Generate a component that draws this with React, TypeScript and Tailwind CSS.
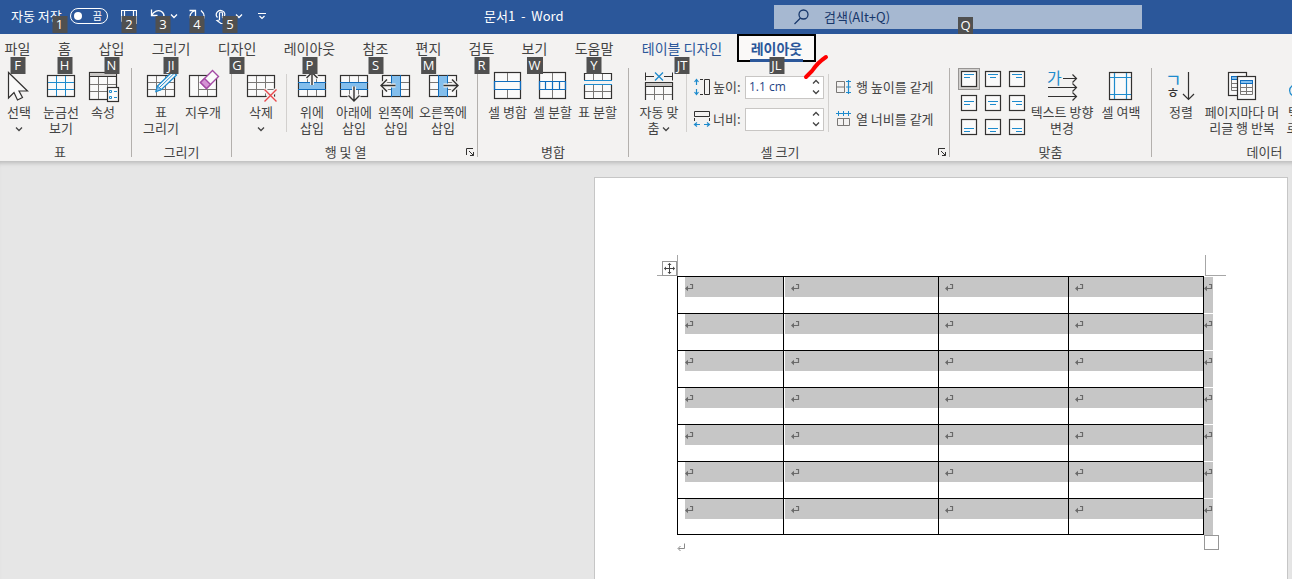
import React, { useState } from 'react';
import clsx from 'clsx';

const INK = '#323130';
const GRID = '#797775';
const BLUE = '#1e8bcd';
const DEEP = '#0f6cbd';
const BAND = '#83beec';

const KeyTip = ({ text, className }: { text: string; className: string }) => (
  <span
    className={clsx(
      "absolute z-20 h-[17px] min-w-[15px] px-[2px] bg-[#505050] text-white text-center text-[13px] leading-[17px] font-normal font-['Open_Sans','Noto_Sans',sans-serif]",
      className
    )}
  >
    {text}
  </span>
);

const Chevron = () => (
  <svg width="8" height="8" viewBox="0 0 8 8" fill="none" stroke="currentColor" strokeWidth="1.3" className="inline-block shrink-0">
    <path d="M1 2.500 4 5.500 7 2.500" />
  </svg>
);

const Icon = ({ children }: { children: React.ReactNode }) => (
  <svg width="32" height="32" viewBox="0 0 32 32" fill="none" stroke={INK} className="shrink-0 overflow-visible">
    {children}
  </svg>
);

const Small = ({ children }: { children: React.ReactNode }) => (
  <svg width="16" height="16" viewBox="0 0 16 16" fill="none" stroke={INK} className="shrink-0 overflow-visible">
    {children}
  </svg>
);

// 28x22 table outline shared by most of the large icons
const TableBox = () => <rect x="2.5" y="4.5" width="27" height="21" fill="#fafafa" strokeWidth="1.2" />;
const TableLines = () => <path d="M11.5 5V25M20.5 5V25M3 11.5H29M3 18.5H29" stroke={GRID} />;

const SelectIcon = () => (
  <Icon><path d="M5.5 1.5V27L11 21.5 14.5 29 19.5 26.5 16 20H24.5Z" fill="#fafafa" strokeWidth="1.2" /></Icon>
);

const GridlinesIcon = () => (
  <Icon>
    <TableBox />
    <path d="M11.5 5V25M20.5 5V25M3 11.5H29M3 18.5H29" stroke={BLUE} />
  </Icon>
);

const PropertiesIcon = () => (
  <Icon>
    <rect x="2.5" y="1.5" width="27" height="27" fill="#fafafa" strokeWidth="1.2" />
    <rect x="3" y="2" width="26" height="3" fill="#c8c6c4" stroke="none" />
    <path d="M3 5.5H29" />
    <path d="M11.5 6V28M20.5 6V28M3 13.5H29M3 20.5H29" stroke={GRID} />
    <rect x="20.5" y="16.5" width="11" height="14" fill="#fafafa" strokeWidth="1.2" />
    <path d="M22.5 19.5h2v2h-2zM22.5 25.5h2v2h-2zM27 20.5h3M27 26.5h3" stroke={BLUE} />
  </Icon>
);

const DrawIcon = () => (
  <Icon>
    <TableBox />
    <TableLines />
    <path d="M11 20.5 12.5 15 27.5 0.5 31.5 4 16.5 18.5Z" fill="#fafafa" stroke={BLUE} strokeWidth="1.3" />
    <path d="M11 20.5 12.5 15 16.5 18.5Z" fill={BAND} stroke={BLUE} />
    <path d="M14.5 16.5 29 2.5" stroke={BLUE} />
  </Icon>
);

const EraserIcon = () => (
  <Icon>
    <TableBox />
    <path d="M11.5 5V25M20.5 18V25M11.5 18.5H29" stroke={GRID} />
    <path d="M25.5-.5 31.5 5.5 19.5 17.5 13.5 11.5Z" fill="#fafafa" stroke="#a349a4" strokeWidth="1.4" />
    <path d="M17.5 7.5 23.5 13.5 19.5 17.5 13.5 11.5Z" fill="#d492d4" stroke="#a349a4" strokeWidth="1.4" />
  </Icon>
);

const DeleteIcon = () => (
  <Icon>
    <TableBox />
    <TableLines />
    <path d="M19.5 18.5 31.5 30.5M31.5 18.5 19.5 30.5" stroke="#f3f2f1" strokeWidth="4" />
    <path d="M19.5 18.5 31.5 30.5M31.5 18.5 19.5 30.5" stroke="#e8484c" strokeWidth="1.4" />
  </Icon>
);

const InsertIcon = ({ arrow, vertical, lines }: { arrow: string; vertical?: boolean; lines: string }) => (
  <Icon>
    <TableBox />
    <path d={lines} stroke={GRID} />
    {vertical ? (
      <>
        <rect x="11" y="5" width="10" height="20" fill={BAND} stroke="none" />
        <path d="M11.5 4V26M20.5 4V26" stroke={DEEP} />
      </>
    ) : (
      <>
        <rect x="3" y="11" width="26" height="8" fill={BAND} stroke="none" />
        <path d="M2 11.5H30M2 18.5H30" stroke={DEEP} />
      </>
    )}
    <path d={arrow} stroke="#f3f2f1" strokeWidth="4" />
    <path d={arrow} strokeWidth="1.4" />
  </Icon>
);

const MergeIcon = () => (
  <Icon>
    <rect x="2.5" y="1.5" width="26" height="26" fill="#fafafa" strokeWidth="1.2" />
    <path d="M15.5 2V10M15.5 19V27" stroke={GRID} />
    <path d="M2.5 10.5h26v8h-26z" stroke={DEEP} strokeWidth="1.2" />
  </Icon>
);

const SplitCellsIcon = () => (
  <Icon>
    <rect x="2.5" y="1.5" width="26" height="26" fill="#fafafa" strokeWidth="1.2" />
    <path d="M15.5 2V10M15.5 19V27" stroke={GRID} />
    <path d="M2.5 10.5h26v8h-26zM8.5 10.5v8M15.5 10.5v8M22.5 10.5v8" stroke={DEEP} strokeWidth="1.2" />
  </Icon>
);

const SplitTableIcon = () => (
  <Icon>
    <path d="M2.5 9V2.5H29.5V9" fill="#fafafa" strokeWidth="1.2" />
    <path d="M2.5 14V27.5H29.5V14" fill="#fafafa" strokeWidth="1.2" />
    <path d="M11.5 3V9M20.5 3V9M11.5 14V27M20.5 14V27M3 20.5H29" stroke={GRID} />
    <path d="M2 9.5H30M2 13.5H30" stroke={BLUE} strokeWidth="1.2" />
  </Icon>
);

const AutoFitIcon = () => (
  <Icon>
    <path d="M2.5 1.5V9.5M29.5 1.5V9.5M3 5.5H11M21 5.5H29" />
    <path d="M12 1.5 20 9.5M20 1.5 12 9.5" stroke={BLUE} strokeWidth="1.3" />
    <path d="M2.5 29V11.5H29.5V29" fill="#fafafa" strokeWidth="1.2" />
    <rect x="3" y="12" width="26" height="3" fill="#c8c6c4" stroke="none" />
    <path d="M3 15.5H29" />
    <path d="M11.5 16V29M20.5 16V29M3 23.5H29" stroke={GRID} />
  </Icon>
);

const TextDirectionIcon = () => (
  <Icon>
    <text x="1" y="13" fontSize="16" fill={BLUE} stroke="none">가</text>
    <path d="M17 7.5H30M26.5 3.5 30.5 7.5 26.5 11.5M2 16.5H30M26.5 12.5 30.5 16.5 26.5 20.5M2 25.5H30M26.5 21.5 30.5 25.5 26.5 29.5" strokeWidth="1.2" />
  </Icon>
);

const MarginsIcon = () => (
  <Icon>
    <rect x="4.5" y="1.5" width="22" height="27" fill="#fafafa" strokeWidth="1.2" />
    <path d="M9.5 2V28M21.5 2V28M5 6.5H26M5 23.5H26" stroke={BLUE} strokeWidth="1.2" />
  </Icon>
);

const SortIcon = () => (
  <Icon>
    <text x="0" y="16" fontSize="18" fill={BLUE} stroke="none">ㄱ</text>
    <text x="1" y="27" fontSize="15" fill={INK} stroke="none">ㅎ</text>
    <path d="M23.5 1V28.5M18 23 23.5 28.5 29 23" strokeWidth="1.2" />
  </Icon>
);

const RepeatHeaderIcon = () => (
  <Icon>
    <rect x="2.5" y="1.5" width="18" height="23" fill="#fafafa" strokeWidth="1.2" />
    <rect x="5.5" y="5.5" width="12" height="3" fill={BAND} stroke={DEEP} />
    <path d="M5.5 9V19.5H17M6 12.5H17M6 16.5H17" stroke={GRID} />
    <rect x="11.5" y="5.5" width="18" height="23" fill="#fafafa" strokeWidth="1.2" />
    <path d="M14.5 13V23.5H26.5V13M20.5 13V23M15 16.5H26M15 20.5H26" stroke={GRID} />
    <rect x="14.5" y="9.5" width="12" height="3" fill={BAND} stroke={DEEP} />
  </Icon>
);

const ConvertIcon = () => (
  <Icon>
    <path d="M3 14C-1.500 17-1.500 22 3 25" stroke={BLUE} strokeWidth="1.3" />
    <rect x="8.500" y="4.500" width="21" height="21" fill="#fafafa" />
  </Icon>
);

const RibbonButton = ({ icon, className, children }: { icon: React.ReactNode; className: string; children: React.ReactNode }) => (
  <button type="button" className={clsx('flex shrink-0 flex-col items-center pt-[3px] hover:bg-[#e1dfdd]', className)}>
    {icon}
    <span className="mt-px whitespace-pre text-center text-[13px] leading-4">{children}</span>
  </button>
);

const Launcher = ({ name }: { name: string }) => (
  <button type="button" aria-label={name} className="w-[18px] pl-[7px] shrink-0">
    <svg width="9" height="9" viewBox="0 0 9 9" fill="none" stroke={INK}>
      <path d="M.5 7V.5H7M3 3 7.500 7.500M7.500 4V7.500H4" />
    </svg>
  </button>
);

const Group = ({ title, className, launcher, labelClass, children }: {
  title: string;
  className: string;
  launcher?: boolean;
  labelClass?: string;
  children: React.ReactNode;
}) => (
  <section aria-label={title} className={clsx('flex h-[93px] shrink-0 flex-col', className)}>
    <div className="flex flex-1 items-start">{children}</div>
    <div className={clsx('flex items-center', labelClass)}>
      <span className="flex-1 text-center text-[13px] leading-[18px]">{title}</span>
      {launcher && <Launcher name={`${title} 설정`} />}
    </div>
  </section>
);

const Divider = () => <div className="h-[89px] w-px shrink-0 bg-[#b3b0ad]" />;
const InnerDivider = ({ className }: { className: string }) => (
  <div className={clsx('mt-[6px] h-[58px] w-px shrink-0 bg-[#d2d0ce]', className)} />
);

const SizeField = ({ id, label, icon, initial }: { id: string; label: string; icon: React.ReactNode; initial: string }) => {
  const [value, setValue] = useState(initial);
  const step = (delta: number) => setValue(`${Math.max(0, (parseFloat(value) || 0) + delta).toFixed(1)} cm`);

  return (
    <div className="flex h-8 items-center">
      {icon}
      <label htmlFor={id} className="ml-[3px] w-8 whitespace-nowrap text-[13px] leading-4">{label}</label>
      <div className="flex h-[23px] w-[79px] border border-[#c8c6c4] bg-white">
        <input
          id={id}
          value={value}
          onChange={(e) => setValue(e.target.value)}
          className="w-[62px] min-w-0 pl-[3px] text-[12px] text-[#1f4485] outline-none font-['Open_Sans','Noto_Sans',sans-serif]"
        />
        <div className="flex flex-1 flex-col items-center justify-around">
          <button type="button" aria-label={`${label} 늘리기`} onClick={() => step(0.1)} className="flex h-2 rotate-180 items-center">
            <Chevron />
          </button>
          <button type="button" aria-label={`${label} 줄이기`} onClick={() => step(-0.1)} className="flex h-2 items-center">
            <Chevron />
          </button>
        </div>
      </div>
    </div>
  );
};

const tabs = [
  { name: '파일', tip: 'F', width: '-ml-[9px] w-[53px]' },
  { name: '홈', tip: 'H', width: 'w-[41px]' },
  { name: '삽입', tip: 'N', width: 'w-[53px]' },
  { name: '그리기', tip: 'JI', width: 'w-[66px]' },
  { name: '디자인', tip: 'G', width: 'w-[66px]' },
  { name: '레이아웃', tip: 'P', width: 'w-[79px]' },
  { name: '참조', tip: 'S', width: 'w-[53px]' },
  { name: '편지', tip: 'M', width: 'w-[53px]' },
  { name: '검토', tip: 'R', width: 'w-[53px]' },
  { name: '보기', tip: 'W', width: 'w-[53px]' },
  { name: '도움말', tip: 'Y', width: 'w-[66px]' },
  { name: '테이블 디자인', tip: 'JT', width: 'w-[110px] text-[#2b579a]' },
];

const alignments = [
  { name: '왼쪽 위', d: 'M3 3.500H13M3 6.500H9' },
  { name: '가운데 위', d: 'M3 3.500H13M5 6.500H11' },
  { name: '오른쪽 위', d: 'M3 3.500H13M7 6.500H13' },
  { name: '왼쪽 가운데', d: 'M3 6.500H13M3 9.500H9' },
  { name: '정가운데', d: 'M3 6.500H13M5 9.500H11' },
  { name: '오른쪽 가운데', d: 'M3 6.500H13M7 9.500H13' },
  { name: '왼쪽 아래', d: 'M3 9.500H13M3 12.500H9' },
  { name: '가운데 아래', d: 'M3 9.500H13M5 12.500H11' },
  { name: '오른쪽 아래', d: 'M3 9.500H13M7 12.500H13' },
];

const TitleBar = () => {
  const [autoSave, setAutoSave] = useState(false);

  return (
    <header className="flex h-[34px] items-center bg-[#2b579a] text-[13px] text-white">
      <div className="flex h-full w-[484px] shrink-0 items-center pb-[2px] pl-[11px]">
        <label className="relative flex h-full w-[97px] items-center justify-between whitespace-nowrap">
          자동 저장
          <input
            type="checkbox"
            role="switch"
            checked={autoSave}
            onChange={(e) => setAutoSave(e.target.checked)}
            className="peer absolute right-0 h-4 w-[38px] opacity-0"
          />
          <span className="flex h-4 w-[38px] items-center justify-between rounded-full border border-white pl-[3px] pr-[5px] text-[10px] leading-none peer-checked:flex-row-reverse">
            <span className="h-2 w-2 rounded-full bg-white" />
            {autoSave ? '켬' : '끔'}
          </span>
          <KeyTip text="1" className="left-1/2 top-4 -translate-x-1/2" />
        </label>

        <button type="button" aria-label="저장" className="relative ml-2 flex h-full w-[26px] items-center justify-center">
          <svg width="16" height="16" viewBox="0 0 16 16" fill="none" stroke="currentColor" strokeWidth="1.2">
            <path d="M.5 2.500H15.500V15.500H3L.5 13ZM3.500 2.500V8.500H12.500V2.500M4.500 15V11H11.500V15" />
          </svg>
          <KeyTip text="2" className="left-1/2 top-4 -translate-x-1/2" />
        </button>
        <button type="button" aria-label="실행 취소" className="relative flex h-full w-[42px] items-center gap-1 pl-2">
          <svg width="16" height="16" viewBox="0 0 16 16" fill="none" stroke="currentColor" strokeWidth="1.3">
            <path d="M1.500 1.500V7.500H7.500M1.500 7.500C4 3 8 1.500 11.500 3.500 15.500 6.500 15 10.500 9 15.500" />
          </svg>
          <Chevron />
          <KeyTip text="3" className="left-1/2 top-4 -translate-x-1/2" />
        </button>
        <button type="button" aria-label="다시 실행" className="relative flex h-full w-[26px] items-center justify-center">
          <svg width="16" height="16" viewBox="0 0 16 16" fill="none" stroke="currentColor" strokeWidth="1.3">
            <path d="M.5 2.500H6.500V8.500M6.500 2.500C1.500 4 0 7.500 2 11.500 5 16 11 16 14 12 16 8.500 15 5 12 2.500" />
          </svg>
          <KeyTip text="4" className="left-1/2 top-4 -translate-x-1/2" />
        </button>
        <button type="button" aria-label="터치/마우스 모드" className="relative flex h-full w-[40px] items-center gap-[5px] pl-1">
          <svg width="16" height="16" viewBox="0 0 16 16" fill="none" stroke="currentColor" strokeWidth="1.2">
            <path d="M3.500 9.500A4.200 4.200 0 1 1 10.500 8" />
            <path d="M5.500 12V5.500A1.500 1.500 0 0 1 8.500 5.500V9.500L13 11V15.500H7L3 12.500 5.500 12" />
          </svg>
          <Chevron />
          <KeyTip text="5" className="left-1/2 top-4 -translate-x-1/2" />
        </button>
        <button type="button" aria-label="빠른 실행 도구 모음 사용자 지정" className="flex h-full w-6 items-center justify-center">
          <svg width="8" height="8" viewBox="0 0 8 8" fill="none" stroke="currentColor" strokeWidth="1.2">
            <path d="M0 1.500H8M1.500 4 4 6.500 6.500 4" />
          </svg>
        </button>
      </div>

      <h1 className="flex-1 whitespace-pre pb-[2px] leading-4">문서1  -  Word</h1>

      <div className="relative mr-[150px] flex h-6 w-[368px] shrink-0 items-center bg-[#a6b8d1] pl-5 text-[#17376b]">
        <svg width="16" height="16" viewBox="0 0 16 16" fill="none" stroke="currentColor" strokeWidth="1.3" className="shrink-0">
          <circle cx="9.500" cy="5.500" r="4.500" />
          <path d="M6.500 9 .5 15" />
        </svg>
        <input
          type="text"
          aria-label="검색"
          placeholder="검색(Alt+Q)"
          className="ml-[14px] min-w-0 flex-1 bg-transparent text-[13px] outline-none placeholder:text-[#17376b]"
        />
        <KeyTip text="Q" className="left-1/2 top-3" />
      </div>
    </header>
  );
};

const TabBar = () => (
  <nav className="flex h-7 text-[14px] leading-[28px]">
    {tabs.map((tab) => (
      <button key={tab.tip} type="button" className={clsx('relative h-7 shrink-0 whitespace-nowrap text-center', tab.width)}>
        {tab.name}
        <KeyTip text={tab.tip} className="left-1/2 top-[23px] -translate-x-1/2" />
      </button>
    ))}
    <button type="button" className="relative h-7 w-[79px] shrink-0 border-2 border-black bg-[#faf9f8] font-bold leading-[24px] text-[#2b579a]">
      레이아웃
      <span className="absolute -bottom-[2px] left-[11px] h-[3px] w-[53px] bg-[#2b579a]" />
      <KeyTip text="JL" className="left-1/2 top-[21px] -translate-x-1/2" />
      {/* red pen stroke pointing at the height box */}
      <svg width="26" height="27" viewBox="0 0 26 27" fill="none" className="pointer-events-none absolute left-[64px] top-[17px] z-30">
        <path d="M23 4C17 8 13 12 9 18L3 24" stroke="#ff0000" strokeWidth="4" strokeLinecap="round" />
      </svg>
    </button>
  </nav>
);

const Ribbon = () => {
  const [align, setAlign] = useState(0);

  return (
    <div className="flex overflow-hidden pt-[6px]">
      <Group title="표" className="w-[131px]" labelClass="mr-[11px]">
        <RibbonButton icon={<SelectIcon />} className="w-[38px]">선택{'\n'}<Chevron /></RibbonButton>
        <RibbonButton icon={<GridlinesIcon />} className="w-[46px]">{'눈금선\n보기'}</RibbonButton>
        <RibbonButton icon={<PropertiesIcon />} className="w-[38px]">속성</RibbonButton>
      </Group>
      <Divider />
      <Group title="그리기" className="w-[99px]">
        <RibbonButton icon={<DrawIcon />} className="ml-2 w-[42px]">{'표\n그리기'}</RibbonButton>
        <RibbonButton icon={<EraserIcon />} className="w-[42px]">지우개</RibbonButton>
      </Group>
      <Divider />
      <Group title="행 및 열" className="w-[245px]" launcher>
        <RibbonButton icon={<DeleteIcon />} className="ml-2 w-[42px]">삭제{'\n'}<Chevron /></RibbonButton>
        <InnerDivider className="mx-1" />
        <RibbonButton
          icon={<InsertIcon arrow="M16 14V1M10.500 7 16 1.500 21.500 7" lines="M11.500 5V11M20.500 5V11M11.500 19V25M20.500 19V25" />}
          className="w-[42px]"
        >
          {'위에\n삽입'}
        </RibbonButton>
        <RibbonButton
          icon={<InsertIcon arrow="M16 15.500V30M10.500 24.500 16 30 21.500 24.500" lines="M11.500 5V11M20.500 5V11M11.500 19V25M20.500 19V25" />}
          className="w-[42px]"
        >
          {'아래에\n삽입'}
        </RibbonButton>
        <RibbonButton
          icon={<InsertIcon vertical arrow="M15.500 14.500H1M7 8.500 1 14.500 7 20.500" lines="M3 11.500H29M3 18.500H29" />}
          className="w-[42px]"
        >
          {'왼쪽에\n삽입'}
        </RibbonButton>
        <RibbonButton
          icon={<InsertIcon vertical arrow="M16.500 14.500H31M25 8.500 31 14.500 25 20.500" lines="M3 11.500H29M3 18.500H29" />}
          className="w-[52px]"
        >
          {'오른쪽에\n삽입'}
        </RibbonButton>
      </Group>
      <Divider />
      <Group title="병합" className="w-[150px]">
        <RibbonButton icon={<MergeIcon />} className="ml-[7px] w-[45px]">셀 병합</RibbonButton>
        <RibbonButton icon={<SplitCellsIcon />} className="w-[45px]">셀 분할</RibbonButton>
        <RibbonButton icon={<SplitTableIcon />} className="w-[45px]">표 분할</RibbonButton>
      </Group>
      <Divider />
      <Group title="셀 크기" className="w-[320px]" launcher>
        <RibbonButton icon={<AutoFitIcon />} className="ml-2 w-[44px]">{'자동 맞\n춤 '}<Chevron /></RibbonButton>
        <InnerDivider className="ml-[5px] mr-[7px]" />
        <div className="pt-[3px]">
          <SizeField
            id="row-height"
            label="높이:"
            initial="1.1 cm"
            icon={
              <Small>
                <path d="M2.500 1V6M2.500 10V15M.5 3 2.500.5 4.500 3M.5 13 2.500 15.500 4.500 13" stroke={BLUE} strokeWidth="1.2" />
                <path d="M6 .5H9M6 15.500H9M10.500.5H15.500V15.500H10.500Z" />
              </Small>
            }
          />
          <SizeField
            id="column-width"
            label="너비:"
            initial=""
            icon={
              <Small>
                <path d="M.5.5H15.500V5.500H.5ZM.5 7V10M15.500 7V10" />
                <path d="M1 13.500H6M10 13.500H15M3 11.500.5 13.500 3 15.500M13 11.500 15.500 13.500 13 15.500" stroke={BLUE} strokeWidth="1.2" />
              </Small>
            }
          />
        </div>
        <InnerDivider className="ml-1 mr-[7px]" />
        <div className="pt-[3px] text-[13px] leading-4">
          <button type="button" className="flex h-8 items-center gap-1 whitespace-nowrap">
            <Small>
              <path d="M.5 2.500H8.500V13.500H.5ZM.5 8H8.500" stroke={GRID} />
              <path d="M12.500 1V15M10 2.500H15M10 8H15M10 13.500H15" stroke={BLUE} strokeWidth="1.2" />
            </Small>
            행 높이를 같게
          </button>
          <button type="button" className="flex h-8 items-center gap-1 whitespace-nowrap">
            <Small>
              <path d="M1.500 7.500H13.500V14.500H1.500ZM7.500 7.500V14.500" stroke={GRID} />
              <path d="M0 2.500H15M2.500 0V5M7.500 0V5M12.500 0V5" stroke={BLUE} />
            </Small>
            열 너비를 같게
          </button>
        </div>
      </Group>
      <Divider />
      <Group title="맞춤" className="w-[201px]">
        <div className="ml-2 grid grid-cols-3 gap-[2px]">
          {alignments.map((item, i) => (
            <button
              key={item.name}
              type="button"
              aria-label={item.name}
              aria-pressed={align === i}
              onClick={() => setAlign(i)}
              className={clsx('flex size-[22px] items-center justify-center', align === i && 'bg-[#d2d0ce] outline outline-1 -outline-offset-1 outline-[#979593]')}
            >
              <Small>
                <rect x=".5" y=".5" width="15" height="15" fill="#fafafa" strokeWidth="1.2" />
                <path d={item.d} stroke={BLUE} />
              </Small>
            </button>
          ))}
        </div>
        <RibbonButton icon={<TextDirectionIcon />} className="ml-[2px] w-16">{'텍스트 방향\n변경'}</RibbonButton>
        <RibbonButton icon={<MarginsIcon />} className="ml-1 w-[46px]">셀 여백</RibbonButton>
      </Group>
      <Divider />
      <Group title="데이터" className="w-[225px]">
        <RibbonButton icon={<SortIcon />} className="ml-2 w-[42px]">정렬</RibbonButton>
        <RibbonButton icon={<RepeatHeaderIcon />} className="w-[80px]">{'페이지마다 머\n리글 행 반복'}</RibbonButton>
        <RibbonButton icon={<ConvertIcon />} className="w-[48px]">{'텍스트\n로 변환'}</RibbonButton>
      </Group>
    </div>
  );
};

const CellMark = ({ className }: { className?: string }) => (
  <svg width="9" height="9" viewBox="0 0 9 9" fill="none" stroke="#6a6a6a" className={clsx('shrink-0', className)}>
    <path d="M5 1.500H7.500V5.500H2" strokeWidth="1.200" />
    <path d="M0 5.500 3 2.800V8.200Z" fill="#6a6a6a" stroke="none" />
  </svg>
);

const columns = [
  { width: 'w-[107px] border-l', fill: 'ml-[7px]', mark: '' },
  { width: 'w-[155px]', fill: 'ml-px', mark: 'ml-[6px]' },
  { width: 'w-[130px]', fill: '', mark: 'ml-[6px]' },
  { width: 'w-[135px]', fill: '', mark: 'ml-[6px]' },
];

const ROWS = 7;

const Document = () => (
  <main className="flex flex-1 overflow-hidden bg-[#e6e6e6] pt-4 shadow-[inset_0_5px_4px_-3px_#b8b8b8]">
    <div className="ml-auto mr-1 w-[694px] shrink-0 border border-b-0 border-[#c6c6c6] bg-white pl-[82px] pt-[98px]">
      <div className="relative w-[536px]">
        {/* margin corners, move handle and resize handle */}
        <span className="absolute -left-5 -top-[21px] h-[21px] w-[21px] border-b border-r border-[#a6a6a6]" />
        <span className="absolute left-[528px] -top-[21px] h-[21px] w-[21px] border-b border-l border-[#a6a6a6]" />
        <button type="button" aria-label="표 이동" className="absolute -left-[15px] -top-[15px] size-[15px] border border-[#979797] bg-white">
          <svg width="13" height="13" viewBox="0 0 13 13" fill="none" stroke="#444">
            <path d="M6.500 1.500V11.500M1.500 6.500H11.500" />
            <path d="M6.500 1 8.500 3H4.500ZM6.500 12 8.500 10H4.500ZM1 6.500 3 4.500V8.500ZM12 6.500 10 4.500V8.500Z" fill="#444" stroke="none" />
          </svg>
        </button>

        <table className="w-full table-fixed border-separate border-spacing-0">
          <tbody>
            {Array.from({ length: ROWS }, (_, row) => (
              <tr key={row} className={clsx(row === 0 ? 'h-[38px]' : row === ROWS - 1 ? 'h-[36px]' : 'h-[37px]')}>
                {columns.map((col, i) => (
                  <td key={i} className={clsx('border-b border-r border-black p-0 align-top', col.width, row === 0 && 'border-t')}>
                    <div className={clsx('flex h-5 items-center bg-[#c6c6c6]', col.fill)}>
                      <CellMark className={col.mark} />
                    </div>
                  </td>
                ))}
                <td
                  className={clsx(
                    'w-[9px] bg-[#c6c6c6] p-0 align-top',
                    row === 0 && 'border-t border-t-white',
                    row < ROWS - 1 && 'border-b border-b-white'
                  )}
                >
                  <div className="flex h-5 items-center">
                    <CellMark />
                  </div>
                </td>
              </tr>
            ))}
          </tbody>
        </table>

        <span className="absolute left-[527px] top-full size-[15px] border border-[#979797] bg-white" />
      </div>
      <svg width="8" height="9" viewBox="0 0 8 9" fill="none" stroke="#8a8a8a" className="mt-2">
        <path d="M7.500.5V5.500H1.500M3.500 3 1 5.500 3.500 8" />
      </svg>
    </div>
  </main>
);

export default function App() {
  return (
    <div className="flex min-h-screen flex-col overflow-hidden bg-[#f3f2f1] text-[#444] font-['Noto_Sans_CJK_KR','Noto_Sans',sans-serif]">
      <TitleBar />
      <TabBar />
      <Ribbon />
      <Document />
    </div>
  );
}
